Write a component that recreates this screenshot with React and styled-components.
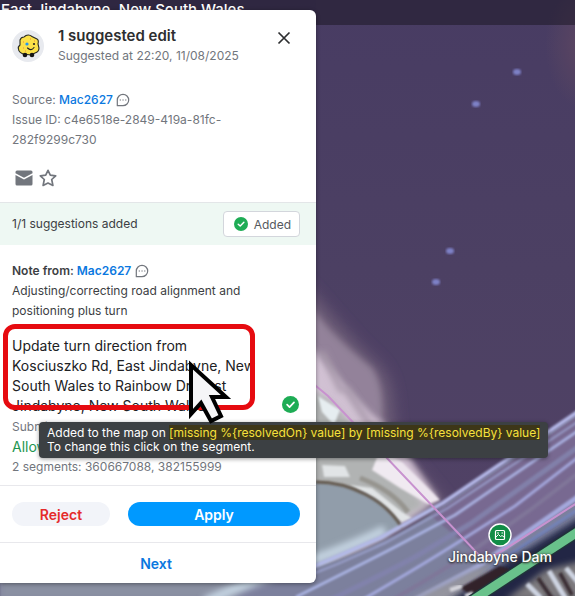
import React from "react";
import styled, { createGlobalStyle } from "styled-components";

const streaks = [
    { d: "M300 572 C340 556 360 546 380 538 L443 503 L585 407", color: "#b4b9e8", width: 4 },
    { d: "M300 579 C345 562 365 552 385 543 L448 508 L585 417", color: "#9aa0cc", width: 2 },
    { d: "M296 597 C340 575 370 560 395 547 L455 515 L585 426", color: "#a9b2e2", width: 3 },
    { d: "M330 600 C370 580 400 566 420 554 L470 524 L585 442", color: "#8182ab", width: 5 },
    { d: "M362 600 C400 578 430 560 457 543 L515 506 L585 452", color: "#a3a8dd", width: 3 },
    { d: "M385 604 C420 584 450 566 475 549 L530 510 L585 468", color: "#7f7799", width: 4 },
    { d: "M415 600 C445 584 460 576 477 567 L520 537 L585 492", color: "#a5acdf", width: 5 },
    { d: "M428 604 C455 588 475 578 490 568 L530 541 L585 505", color: "#7384bb", width: 3 },
];

const stars = [[517, 72], [476, 104], [450, 251], [436, 282]];

const MapPicture = () => (
    <MapSvg viewBox="0 0 575 596" preserveAspectRatio="xMinYMin slice" aria-hidden="true">
        <defs>
            <linearGradient id="water" x1="0" y1="0" x2="0" y2="1">
                <stop offset="0" stopColor="#463b62" />
                <stop offset="0.45" stopColor="#4a3f62" />
                <stop offset="1" stopColor="#504365" />
            </linearGradient>
            <radialGradient id="glow">
                <stop offset="0" stopColor="#5b4760" />
                <stop offset="1" stopColor="#5b4760" stopOpacity="0" />
            </radialGradient>
            <filter id="soft1"><feGaussianBlur stdDeviation="1" /></filter>
            <filter id="soft3"><feGaussianBlur stdDeviation="3" /></filter>
            <filter id="soft8"><feGaussianBlur stdDeviation="8" /></filter>
        </defs>
        <rect width="575" height="596" fill="url(#water)" />
        <ellipse cx="585" cy="45" rx="40" ry="65" fill="url(#glow)" />
        {stars.map(([x, y]) => (
            <ellipse key={x} cx={x} cy={y} rx="4" ry="3" fill="#7d83c9" filter="url(#soft1)" />
        ))}

        {/* shore */}
        <path d="M290 270 C325 305 345 335 373 360 S385 410 400 450 L446 505 L290 600Z" fill="#6f6078" filter="url(#soft8)" />
        <path d="M300 288 C320 325 345 345 372 368 Q384 385 382 420 L440 500 L300 600Z" fill="#93849a" filter="url(#soft3)" />
        <path d="M300 335 C335 370 352 400 385 425 L436 498 L400 525 L300 570Z" fill="#d3c5d5" filter="url(#soft3)" />
        <path d="M345 388 L380 440 M322 352 L342 392" stroke="#a89bab" strokeWidth="6" filter="url(#soft3)" />
        <path d="M300 385 L330 400 L375 450 L425 505 L300 580Z" fill="#b1b3b3" filter="url(#soft3)" />
        <path d="M318 396 L340 410 L334 425 L322 412Z" fill="#e6edf0" filter="url(#soft1)" />
        <path d="M380 450 L402 462 L440 500 L428 504 L400 488 L372 470Z" fill="#f0eaf1" filter="url(#soft1)" />
        <path d="M322 465 L345 466 L350 477 L324 477Z M350 485 L372 488 L402 512 L412 518 L402 522Z" fill="#e1e4e6" filter="url(#soft1)" />
        <path d="M360 478 Q392 490 408 512" stroke="#96948f" strokeWidth="5" fill="none" filter="url(#soft1)" />
        <path d="M290 482 C350 478 382 496 402 526 L385 535 L290 580Z" fill="#919daa" filter="url(#soft1)" />
        <path d="M316 482 C350 482 386 500 402 528" stroke="#62574c" strokeWidth="3" fill="none" filter="url(#soft1)" />

        {/* canal */}
        <path d="M0 570 H300 C350 560 410 530 440 508 L590 405 V610 H0Z" fill="#7b809d" filter="url(#soft1)" />
        <path d="M0 575 H260 L230 600 H0Z" fill="#8a90a2" filter="url(#soft3)" />
        <path d="M205 602 C260 575 320 562 385 530" stroke="#c3d2e0" strokeWidth="10" fill="none" filter="url(#soft3)" />
        <path d="M443 508 L590 407 V494 L497 552 L478 555 L430 515Z" fill="#776b91" filter="url(#soft1)" />
        {streaks.map((s) => (
            <path key={s.d} d={s.d} stroke={s.color} strokeWidth={s.width} fill="none" filter="url(#soft1)" />
        ))}
        <path d="M410 600 L475 569 L495 565 L480 604Z" fill="#94949f" filter="url(#soft3)" />
        <path d="M445 604 L500 566 L590 511 V610Z" fill="#222544" filter="url(#soft3)" />
        <path d="M460 588 L500 566 L512 570 L476 598Z" fill="#30232a" filter="url(#soft1)" />
        <path d="M450 590 l12 -4 M465 596 l8 -3" stroke="#d5d5dc" strokeWidth="4" filter="url(#soft1)" />
        <path d="M545 570 L585 560 V600 H505Z" fill="#7c797d" filter="url(#soft3)" />
        <path d="M527 584 l14 14 M549 571 l18 30 M566 568 l15 18" stroke="#ced4e2" strokeWidth="5" filter="url(#soft1)" />
        <path d="M538 578 l15 22 M560 573 l12 22" stroke="#3b2f35" strokeWidth="4" filter="url(#soft1)" />

        <path d="M300 372 L316 386 L328 396 L478 554 Q486 560 499 553 L580 501 V0 H316Z" fill="#a253ad" fillOpacity="0.03" />
        <path d="M300 372 L316 386 L328 396 L478 554 Q486 560 499 553 L580 501" stroke="#c892cf" strokeWidth="2" fill="none" />
        <path d="M470 602 L582 529" stroke="#20333a" strokeWidth="12" />
        <path d="M470 602 L582 529" stroke="#69c28b" strokeWidth="9" />
    </MapSvg>
);

const CheckIcon = ({ size }) => (
    <svg width={size} height={size} viewBox="0 0 16 16" aria-hidden="true">
        <circle cx="8" cy="8" r="8" fill="#1eac55" />
        <path d="M4.8 8.2 7.1 10.4 11.3 6" fill="none" stroke="#fff" strokeWidth="1.6" strokeLinecap="round" strokeLinejoin="round" />
    </svg>
);

const ChatIcon = () => (
    <svg width="14" height="14" viewBox="0 0 14 14" fill="none" stroke="#72767d" aria-hidden="true">
        <path d="M1.3 12.7V7a5.7 5.7 0 1 1 5.7 5.7Z" strokeWidth="1.2" strokeLinejoin="round" />
        <path d="M3.7 7h1.3M6.400 7h1.3M9.100 7h1.3" strokeWidth="1.2" />
    </svg>
);

const WazerIcon = () => (
    <svg width="32" height="32" viewBox="0 0 32 32" aria-hidden="true">
        <path d="M14 5.500 Q17 4 20 6.500 L25 9 Q27 10 26 14 L27 18 Q27 22 23 23 L19 25 L11 24 Q6.500 22 6.500 19 Q5.500 17 8 15 L8 10 Q9 7 12 7Z" fill="#fbe148" stroke="#292a22" strokeWidth="1.100" />
        <circle cx="13" cy="25" r="2.300" fill="#151515" />
        <circle cx="20" cy="25" r="2.300" fill="#151515" />
        <circle cx="15" cy="14" r="1.600" fill="#2196f3" />
        <circle cx="22" cy="14" r="1.100" fill="#222" />
        <path d="M15.500 18 Q19 21.500 22 17.500" fill="none" stroke="#222" strokeWidth="1.100" strokeLinecap="round" />
        <path d="M11 12h1M18 9h1M22 11h1M11 18h1M13 21h1" stroke="#ee8a3c" />
    </svg>
);

const App = () => {
    return (
        <Page>
            <GlobalStyle />
            <MapPicture />
            <TopBar>East Jindabyne, New South Wales</TopBar>
            <Panel>
                <Header>
                    <Avatar><WazerIcon /></Avatar>
                    <HeaderText>
                        <Title>1 suggested edit</Title>
                        <Text>Suggested at 22:20, 11/08/2025</Text>
                    </HeaderText>
                    <IconButton aria-label="Close">
                        <svg width="14" height="14" viewBox="0 0 14 14" stroke="#2d2e30" strokeWidth="1.7">
                            <path d="M1.5 1.5l11 11M12.5 1.5l-11 11" />
                        </svg>
                    </IconButton>
                </Header>
                <Meta>
                    <Text>Source: <UserLink href="#user">Mac2627</UserLink> <ChatIcon /></Text>
                    <Text>Issue ID: c4e6518e-2849-419a-81fc-282f9299c730</Text>
                </Meta>
                <Actions>
                    <IconButton aria-label="Mark as unread">
                        <svg width="18" height="16" viewBox="0 0 18 16">
                            <path d="M2 0.5h14q1.5 0 1.5 1.5v1.300L9 7.8.5 3.300V2Q.5.5 2 .5Z" fill="#72767d" />
                            <path d="M.5 5 9 9.600l8.500-4.600V14q0 1.500-1.500 1.500H2Q.5 15.500.5 14Z" fill="#72767d" />
                        </svg>
                    </IconButton>
                    <IconButton aria-label="Star">
                        <svg width="18" height="18" viewBox="0 0 18 18">
                            <path d="M9 1.300l2.300 4.900 5.400.600-4 3.700 1.200 5.900L9 14 4.100 16.400l1.200-5.900-4-3.700 5.400-.600Z" fill="none" stroke="#72767d" strokeWidth="1.700" strokeLinejoin="round" />
                        </svg>
                    </IconButton>
                </Actions>
                <Summary>
                    <Text $tone="dark">1/1 suggestions added</Text>
                    <AddedButton><CheckIcon size={14} />Added</AddedButton>
                </Summary>
                <Note>
                    <Text $tone="dark"><b>Note from: <UserLink href="#user">Mac2627</UserLink></b> <ChatIcon /></Text>
                    <Text $tone="dark">Adjusting/correcting road alignment and positioning plus turn</Text>
                </Note>
                <Suggestion>
                    <SuggestionBody>
                        <SuggestionTitle>
                            Update turn direction from Kosciuszko Rd, East Jindabyne, New South Wales to Rainbow Dr, East Jindabyne, New South Wales
                        </SuggestionTitle>
                        <Text>Submitted 11/08/2025</Text>
                        <Allowed>Allowed</Allowed>
                        <Text>2 segments: 360667088, 382155999</Text>
                    </SuggestionBody>
                    <Status><CheckIcon size={17} /></Status>
                    <Marker />
                    <Tooltip role="tooltip">
                        Added to the map on <mark>[missing %&#123;resolvedOn&#125; value] by [missing %&#123;resolvedBy&#125; value]</mark>
                        <br />
                        To change this click on the segment.
                    </Tooltip>
                    <Pointer width="44" height="66" viewBox="0 0 44 66" aria-hidden="true">
                        <path d="M3 5 V54 L13 43 L23 61 L33 56 L24 37 H38Z" fill="#f5f5f7" stroke="#000" strokeWidth="4" />
                    </Pointer>
                </Suggestion>
                <Footer>
                    <RejectButton>Reject</RejectButton>
                    <ApplyButton>Apply</ApplyButton>
                </Footer>
                <NextRow>
                    <NextButton>Next</NextButton>
                </NextRow>
            </Panel>
            <Place>
                <svg width="24" height="24" viewBox="0 0 24 24" aria-hidden="true">
                    <circle cx="12" cy="12" r="11" fill="#118c46" stroke="#fff" strokeWidth="1.400" />
                    <rect x="7.500" y="7.500" width="9" height="9" rx="1" fill="none" stroke="#fff" strokeWidth="1.200" />
                    <path d="M8 14l2.500-2.500 2 2 1.500-1 2 1.500M9 10h2M13.500 10h1.500" fill="none" stroke="#fff" />
                </svg>
                Jindabyne Dam
            </Place>
        </Page>
    );
};

const GlobalStyle = createGlobalStyle`
  * {
    box-sizing: border-box;
  }

  body {
    margin: 0;
    font-family: Inter, "Liberation Sans", sans-serif;
  }

  button {
    font-family: inherit;
    cursor: pointer;
  }
`;

const Page = styled.div`
  position: relative;
  min-height: 100vh;
  overflow: hidden;
  background: #4b4066;
`;

const MapSvg = styled.svg`
  position: absolute;
  inset: 0;
  width: 100%;
  height: 100%;
`;

const TopBar = styled.div`
  position: relative;
  height: 25px;
  padding-left: 1px;
  background: rgba(24, 20, 32, 0.5);
  color: #fff;
  font-size: 15px;
  font-weight: 500;
  line-height: 20px;
`;

const Panel = styled.main`
  position: relative;
  z-index: 1;
  width: 60%;
  max-width: 316px;
  margin-top: -15px;
  background: #fff;
  border-radius: 0 6px 6px 0;
  box-shadow: 0 1px 4px rgba(0, 0, 0, 0.4);
`;

const Header = styled.header`
  display: flex;
  align-items: center;
  gap: 14px;
  padding: 16px 24px 0 12px;
`;

const Avatar = styled.div`
  width: 32px;
  height: 32px;
  border-radius: 50%;
  background: #e8eaef;
`;

const HeaderText = styled.div`
  flex: 1;
`;

const Title = styled.h1`
  margin: 0;
  color: #2d2e30;
  font-size: 15px;
  font-weight: 600;
  line-height: 20px;
`;

const Text = styled.p`
  margin: 0;
  color: ${(props) => (props.$tone === "dark" ? "#3c4043" : "#72767d")};
  font-size: 12px;
  line-height: 20px;

  b {
    font-weight: 600;
  }

  svg {
    vertical-align: -3px;
  }
`;

const UserLink = styled.a`
  color: #0a78e0;
  font-weight: 500;
  text-decoration: none;

  b & {
    font-weight: 600;
  }
`;

const IconButton = styled.button`
  display: flex;
  padding: 0;
  border: none;
  background: none;

  ${Header} & {
    align-self: flex-start;
    padding: 5px 1px 0 0;
  }
`;

const Meta = styled.section`
  padding: 24px 72px 0 12px;
`;

const Actions = styled.div`
  display: flex;
  align-items: center;
  gap: 6px;
  height: 52px;
  padding: 4px 15px 0;
`;

const Summary = styled.section`
  display: flex;
  align-items: center;
  justify-content: space-between;
  height: 43px;
  padding: 0 16px 0 12px;
  border-top: 1px solid #e3e6e8;
  background: #eef8f3;
`;

const AddedButton = styled.button`
  display: flex;
  align-items: center;
  gap: 6px;
  height: 26px;
  padding: 0 8px 0 10px;
  border: 1px solid #d3d6dc;
  border-radius: 4px;
  background: #fff;
  color: #55595e;
  font-size: 12px;
`;

const Note = styled.section`
  padding: 16px 48px 0 12px;
`;

const Suggestion = styled.section`
  position: relative;
  display: flex;
  align-items: flex-start;
  justify-content: space-between;
  padding: 15px 17px 8px 12px;
`;

const SuggestionBody = styled.div`
  width: 248px;
`;

const SuggestionTitle = styled.h2`
  margin: 0 0 1px;
  color: #202124;
  font-size: 14px;
  font-weight: 400;
  line-height: 20px;
`;

const Allowed = styled.p`
  margin: 0;
  color: #1e9650;
  font-size: 14px;
  line-height: 20px;
`;

const Status = styled.span`
  display: flex;
  padding-top: 60px;
`;

// red frame around the suggestion title
const Marker = styled.div`
  position: absolute;
  top: 3px;
  left: 3px;
  width: 252px;
  height: 86px;
  border: 5px solid #e60b10;
  border-radius: 12px;
`;

const Tooltip = styled.div`
  position: absolute;
  top: 101px;
  left: 39px;
  padding: 4px 8px;
  border-radius: 4px;
  background: #3c4043;
  box-shadow: 0 1px 4px rgba(0, 0, 0, 0.4);
  color: #fff;
  font-size: 12px;
  line-height: 14px;
  white-space: nowrap;

  mark {
    background: #3d3618;
    color: #f7e13c;
  }
`;

const Pointer = styled.svg`
  position: absolute;
  top: 39px;
  left: 188px;
`;

const Footer = styled.footer`
  display: flex;
  gap: 18px;
  padding: 16px 16px 16px 12px;
  border-top: 1px solid #e8e8ec;
  border-bottom: 1px solid #e8e8ec;
`;

const PillButton = styled.button`
  height: 24px;
  padding: 0;
  border: none;
  border-radius: 12px;
  font-size: 14px;
  font-weight: 600;
`;

const RejectButton = styled(PillButton)`
  flex: 98;
  background: #f2f4f9;
  color: #e52a2a;
`;

const ApplyButton = styled(PillButton)`
  flex: 172;
  background: #0099ff;
  color: #fff;
`;

const NextRow = styled.div`
  padding: 0 16px 0 12px;
`;

const NextButton = styled.button`
  display: block;
  width: 100%;
  height: 40px;
  padding: 0;
  border: none;
  background: none;
  color: #0a78e0;
  font-size: 14px;
  font-weight: 600;
`;

const Place = styled.div`
  position: absolute;
  top: 523px;
  left: 448px;
  display: flex;
  flex-direction: column;
  align-items: center;
  color: #fff;
  font-size: 14px;
  font-weight: 500;
  line-height: 20px;
  text-shadow: 0 0 3px #333, 0 1px 2px #333;
  white-space: nowrap;
`;

export default App;
